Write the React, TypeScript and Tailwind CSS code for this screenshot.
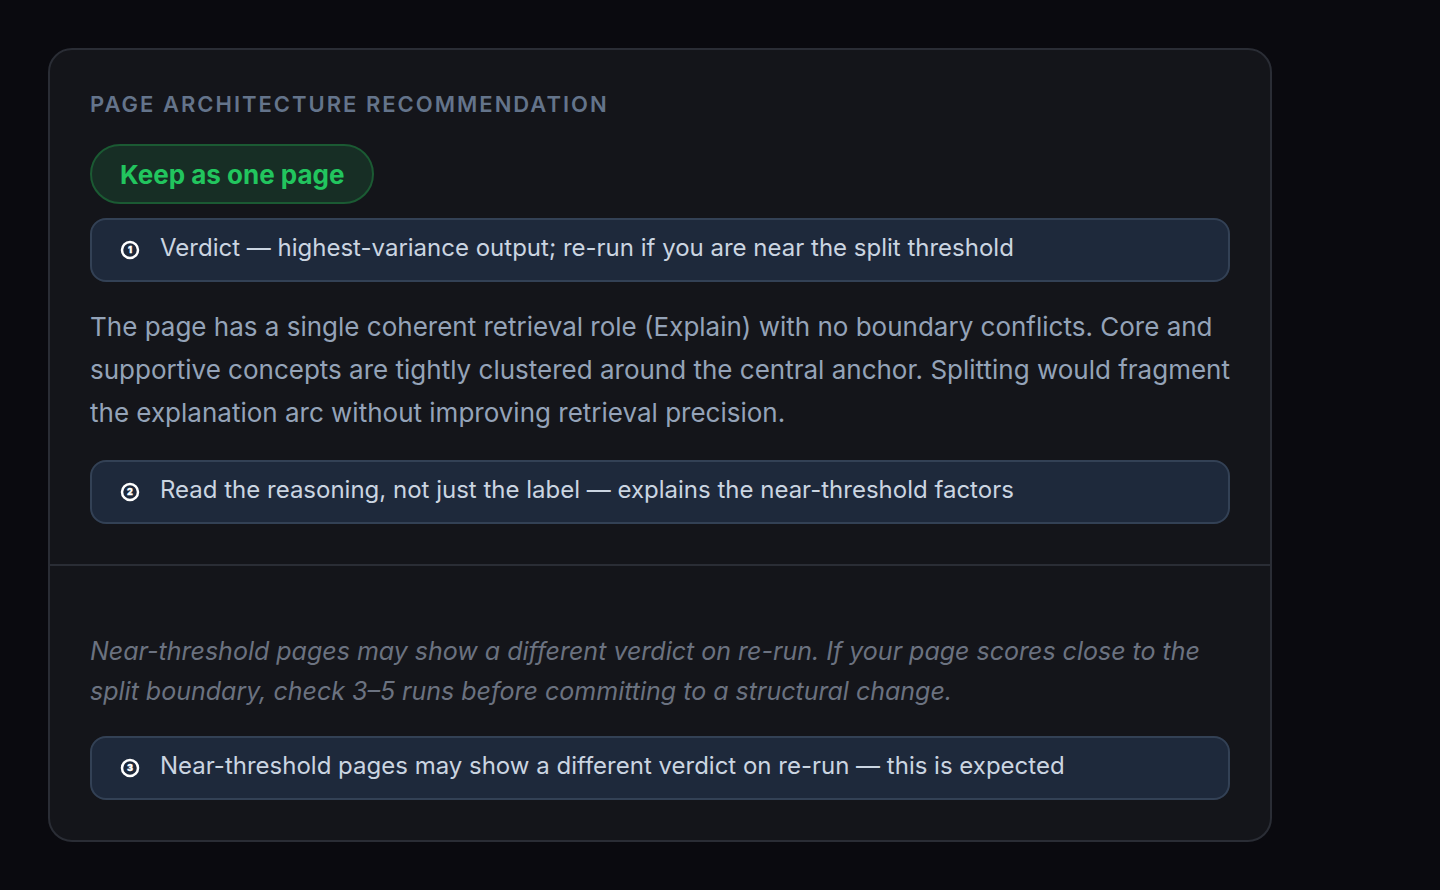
import type { ReactNode } from "react";

function Note({ n, children }: { n: number; children: ReactNode }) {
  return (
    <div className="flex h-16 items-center rounded-2xl border-2 border-[#334155] bg-[#1e293b] px-7 text-2xl text-[#cbd5e1]">
      <span className="flex w-10 shrink-0">
        <svg viewBox="0 0 20 20" className="size-5" role="img" aria-label={String(n)}>
          <circle cx="10" cy="10" r="8" fill="none" stroke="#fff" strokeWidth="2.5" />
          <text
            x="10"
            y="13.2"
            textAnchor="middle"
            fill="#fff"
            stroke="#fff"
            strokeWidth="0.3"
            fontSize="9"
            fontWeight="900"
            fontFamily="Inter, sans-serif"
          >
            {n}
          </text>
        </svg>
      </span>
      <p className="-mt-1">{children}</p>
    </div>
  );
}

export default function App() {
  return (
    <main className="min-h-screen bg-[#0a0a0f] py-12 pl-12 pr-42 font-['Inter',sans-serif]">
      <article className="rounded-3xl border-2 border-[#2a2d35] bg-[#14151a]">
        <section className="border-b-2 border-[#2a2d35] p-10">
          <h1 className="text-[22px] font-semibold uppercase leading-7 tracking-[2px] text-[#64748b]">
            Page Architecture Recommendation
          </h1>
          <div className="mt-[26px] flex">
            <span className="flex h-15 items-center rounded-full border-2 border-[#1b5a33] bg-[#172e25] px-7 text-[26px] font-bold text-[#22c55e]">
              Keep as one page
            </span>
          </div>
          <div className="mt-3.5">
            <Note n={1}>Verdict — highest-variance output; re-run if you are near the split threshold</Note>
          </div>
          <p className="mb-[26px] mt-[23px] text-[26px] leading-[43px] text-[#94a3b8]">
            The page has a single coherent retrieval role (Explain) with no boundary conflicts. Core and supportive
            concepts are tightly clustered around the central anchor. Splitting would fragment the explanation arc
            without improving retrieval precision.
          </p>
          <Note n={2}>Read the reasoning, not just the label — explains the near-threshold factors</Note>
        </section>
        <section className="px-10 pb-10 pt-[65px]">
          <p className="mb-[25px] text-[25px] italic leading-10 text-[#6b7280]">
            Near-threshold pages may show a different verdict on re-run. If your page scores close to the split
            boundary, check 3–5 runs before committing to a structural change.
          </p>
          <Note n={3}>Near-threshold pages may show a different verdict on re-run — this is expected</Note>
        </section>
      </article>
    </main>
  );
}
